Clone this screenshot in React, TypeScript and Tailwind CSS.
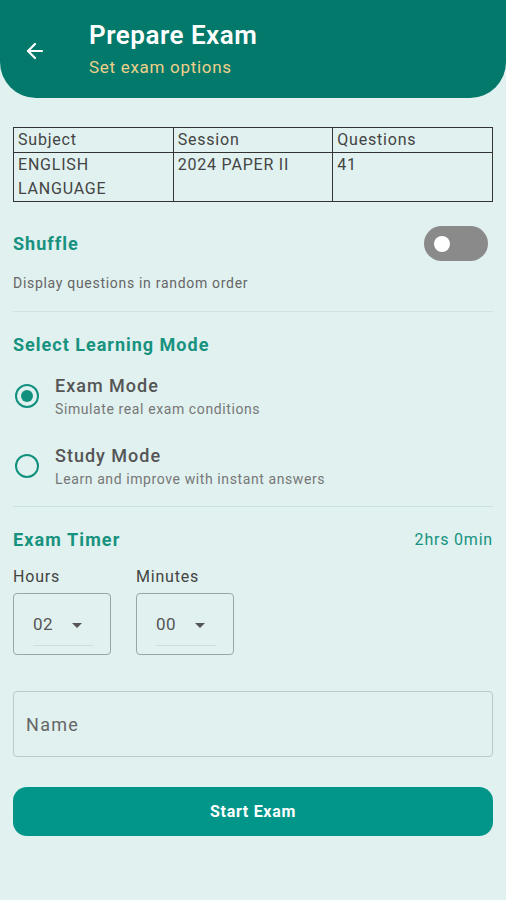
import { ArrowLeft } from 'lucide-react'

const font = { fontFamily: 'Roboto, "Liberation Sans", sans-serif' }

function Radio({ checked }: { checked: boolean }) {
  return (
    <div className="flex h-6 w-6 shrink-0 items-center justify-center rounded-full border-2 border-[#12907e]">
      {checked && <div className="h-3 w-3 rounded-full bg-[#12907e]" />}
    </div>
  )
}

function ModeOption({ title, desc, checked }: { title: string; desc: string; checked: boolean }) {
  return (
    <div className="flex items-center gap-[16px] pl-[2px]">
      <Radio checked={checked} />
      <div className="flex flex-col">
        <span className="text-[18px] font-medium leading-[24px] tracking-[1px] text-[#555]">{title}</span>
        <span className="mt-[2px] text-[14px] leading-[18px] tracking-[0.6px] text-[#777]">{desc}</span>
      </div>
    </div>
  )
}

function TimeSelect({ label, value }: { label: string; value: string }) {
  return (
    <div className="flex flex-col">
      <span className="text-[16px] leading-[20px] tracking-[0.8px] text-[#444]">{label}</span>
      <div className="mt-[6px] flex h-[62px] w-[98px] flex-col justify-center rounded-[4px] border border-[#9aa6a4] pl-[19px] pr-[18px]">
        <div className="flex items-center gap-[19px] pt-[10px]">
          <span className="text-[17px] tracking-[0.5px] text-[#555]">{value}</span>
          <svg width="10" height="5" viewBox="0 0 10 5"><path d="M0 0h10L5 5z" fill="#555" /></svg>
        </div>
        <div className="mt-[7px] h-px w-[60px] bg-[#d0dcda]" />
      </div>
    </div>
  )
}

export default function App() {
  return (
    <div className="min-h-[900px] w-[506px] bg-[#e0f1ef]" style={font}>
      <header className="flex h-[98px] items-start rounded-b-[36px] bg-[#02796b] pt-[19px]">
        <div className="flex w-[89px] justify-start pl-[23px] pt-[20px]">
          <ArrowLeft size={24} color="#fff" strokeWidth={2.2} />
        </div>
        <div className="flex flex-col">
          <h1 className="text-[26px] font-semibold leading-[32px] tracking-[0.5px] text-white">Prepare Exam</h1>
          <p className="mt-[5px] text-[17px] leading-[22px] tracking-[0.7px] text-[#eed08a]">Set exam options</p>
        </div>
      </header>

      <main className="flex flex-col px-[13px]">
        <table className="mt-[29px] w-full table-fixed border-collapse text-[16px] tracking-[0.8px] text-[#444]">
          <tbody>
            <tr className="h-[25px]">
              <td className="border border-[#333] px-[4px] align-top leading-[24px]">Subject</td>
              <td className="border border-[#333] px-[4px] align-top leading-[24px]">Session</td>
              <td className="border border-[#333] px-[4px] align-top leading-[24px]">Questions</td>
            </tr>
            <tr className="h-[48px]">
              <td className="border border-[#333] px-[4px] align-top leading-[24px]">ENGLISH<br />LANGUAGE</td>
              <td className="border border-[#333] px-[4px] align-top leading-[24px]">2024 PAPER II</td>
              <td className="border border-[#333] px-[4px] align-top leading-[24px]">41</td>
            </tr>
          </tbody>
        </table>

        <div className="mt-[24px] flex items-center justify-between">
          <span className="text-[18px] font-bold tracking-[1px] text-[#17927f]">Shuffle</span>
          <div className="mr-[5px] flex h-[35px] w-[64px] items-center rounded-full bg-[#8a8a8a] pl-[10px]">
            <div className="h-[16px] w-[16px] rounded-full bg-white" />
          </div>
        </div>
        <p className="mt-[13px] text-[14px] leading-[18px] tracking-[0.7px] text-[#666]">Display questions in random order</p>
        <div className="mt-[19px] h-px bg-[#cfe4e0]" />

        <h2 className="mt-[21px] text-[18px] font-bold leading-[24px] tracking-[1px] text-[#17927f]">Select Learning Mode</h2>
        <div className="mt-[17px] flex flex-col gap-[26px]">
          <ModeOption title="Exam Mode" desc="Simulate real exam conditions" checked />
          <ModeOption title="Study Mode" desc="Learn and improve with instant answers" checked={false} />
        </div>
        <div className="mt-[18px] h-px bg-[#c7e2dd]" />

        <div className="mt-[21px] flex items-center justify-between">
          <span className="text-[18px] font-bold leading-[24px] tracking-[1.1px] text-[#17927f]">Exam Timer</span>
          <span className="text-[16px] tracking-[0.8px] text-[#17927f]">2hrs 0min</span>
        </div>
        <div className="mt-[15px] flex gap-[25px]">
          <TimeSelect label="Hours" value="02" />
          <TimeSelect label="Minutes" value="00" />
        </div>

        <div className="mt-[36px] flex h-[66px] items-center rounded-[4px] border border-[#bcc9c7] px-[12px]">
          <span className="text-[18px] tracking-[1.3px] text-[#666]">Name</span>
        </div>

        <button className="mt-[30px] h-[49px] w-full rounded-[14px] bg-[#02968a] text-[16px] font-bold tracking-[0.7px] text-white">
          Start Exam
        </button>
      </main>
    </div>
  )
}
